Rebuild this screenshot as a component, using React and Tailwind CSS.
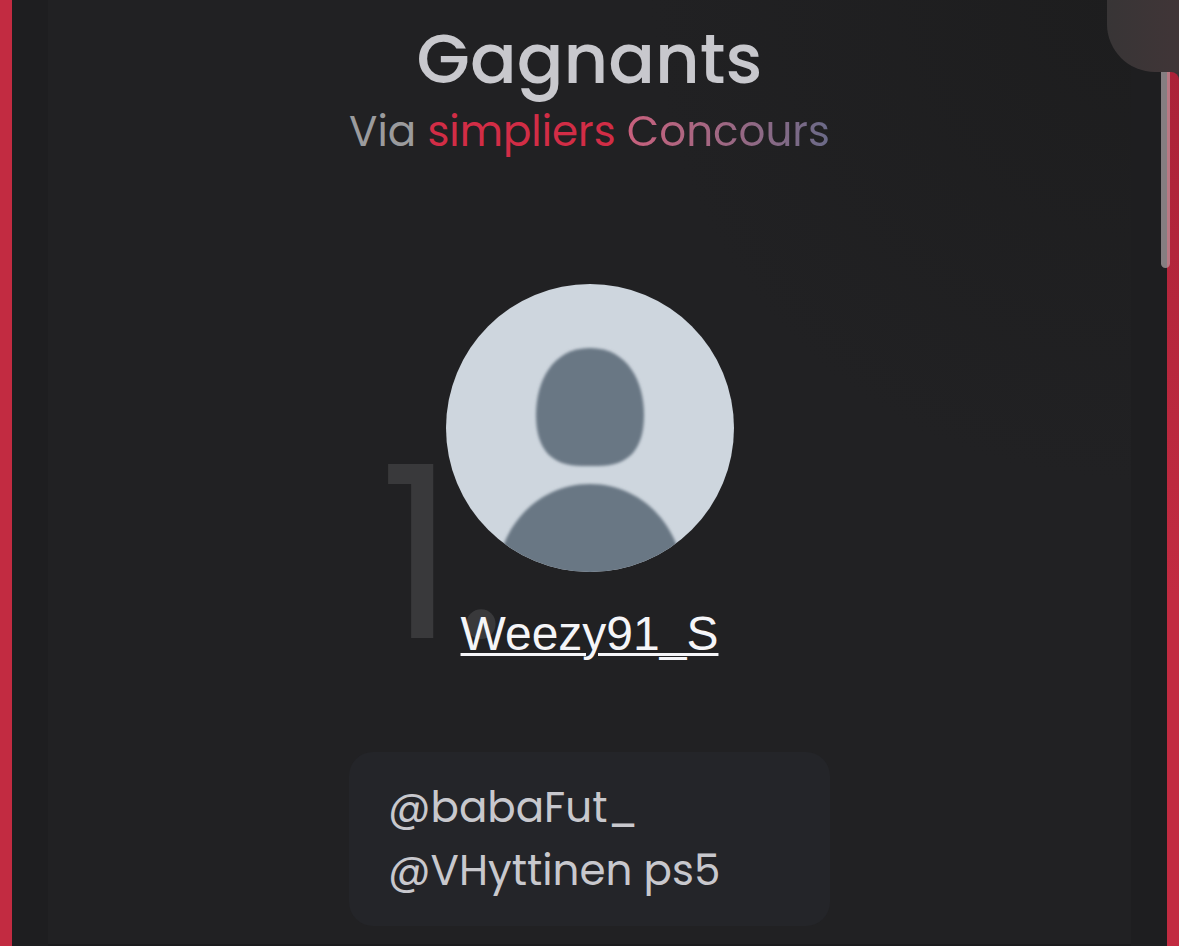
const winners = [
  { rank: 1, name: 'Weezy91_S', mentions: ['@babaFut_', '@VHyttinen ps5'] },
];

function Avatar() {
  return (
    <svg viewBox="0 0 288 288" className="size-72 rounded-full" role="img" aria-label="Avatar">
      <defs>
        <filter id="soft" x="-10%" y="-10%" width="120%" height="120%">
          <feGaussianBlur stdDeviation="1.8" />
        </filter>
      </defs>
      <rect width="288" height="288" fill="#ced6de" />
      <g fill="#697784" filter="url(#soft)">
        <path d="M144 64c38 0 54 34 54 67 0 35-16 51-46 51h-16c-30 0-46-16-46-51 0-33 16-67 54-67Z" />
        <path d="M52 280c8-44 44-80 92-80s84 36 92 80v20H52Z" />
      </g>
    </svg>
  );
}

function Winner({ winner }) {
  return (
    <li className="flex flex-col items-center">
      <div className="relative flex w-[481px] max-w-full flex-col items-center">
        {/* Rang en filigrane */}
        <span className="absolute top-[154px] left-[30px] text-[240px] leading-[232px] text-[#39393b]">
          {winner.rank}.
        </span>
        <div className="relative">
          <Avatar />
        </div>
        <a
          href="#profil"
          className="relative mt-[34px] font-['Liberation_Sans',sans-serif] text-[48px] leading-[56px] text-[#f5f5f8] underline decoration-3 underline-offset-3"
        >
          {winner.name}
        </a>
      </div>
      <div className="mt-[90px] w-[481px] max-w-full rounded-3xl bg-[#242529] px-[39px] py-6 text-[42px] leading-[63px] text-[#c8c8cd]">
        {winner.mentions.map(mention => (
          <p key={mention}>{mention}</p>
        ))}
      </div>
    </li>
  );
}

function App() {
  return (
    <div className="relative flex min-h-screen bg-[#3a3436] font-[Poppins,Inter,sans-serif]">
      <div className="w-3 bg-[#c22b41]" />
      <div className="flex flex-1 bg-[#1e1e20] px-9">
        <main className="flex-1 border-b-2 border-[#1b1b1d] bg-[#212123] bg-radial-[circle_at_100%_0%] from-[#1d1d1e] to-[#212123] to-[480px] pt-[18px] pb-4">
          <header className="text-center">
            <h1 className="text-[69px] leading-[82px] font-medium text-[#c8c8cd]">Gagnants</h1>
            <p className="text-[42px] leading-[63px] text-[#9b9b9d]">
              Via <span className="text-[#d22d46]">simpliers</span>{' '}
              <span className="bg-linear-to-r from-[#c9607d] to-[#6a6a88] bg-clip-text text-transparent">
                Concours
              </span>
            </p>
          </header>
          <ol className="mt-[121px]">
            {winners.map(winner => (
              <Winner key={winner.rank} winner={winner} />
            ))}
          </ol>
        </main>
      </div>
      <div className="flex w-3 flex-col pt-[72px]">
        <div className="flex-1 rounded-tr-lg bg-linear-to-b from-[#ab2238] to-[#c22b41] to-60%" />
      </div>

      {/* Barre de défilement */}
      <div className="absolute top-0 right-[9px] h-[268px] w-[9px] rounded-full bg-linear-to-r from-[#857e81] from-65% to-[#b97883] to-65%" />
      {/* Coin du bouton flottant */}
      <div className="absolute top-0 right-0 h-[72px] w-[72px] rounded-bl-[48px] bg-linear-to-r from-[#383536] to-[#403537]" />
    </div>
  );
}

export default App;
